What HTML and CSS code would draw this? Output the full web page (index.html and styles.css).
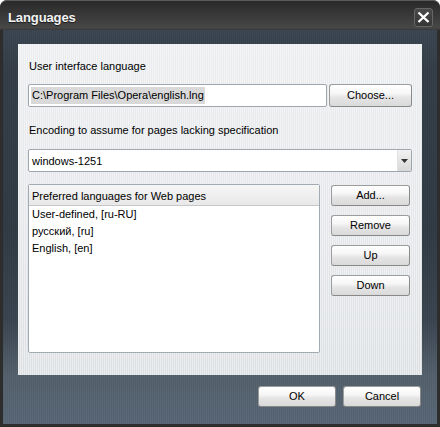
FILE: index.html
```html
<!DOCTYPE html>
<html>
<head>
<meta charset="utf-8">
<link rel="stylesheet" href="styles.css">
</head>
<body>
<div class="window">
  <div class="titlebar">
    <span class="title">Languages</span>
    <div class="close">
      <svg width="17" height="17" viewBox="0 0 17 17"><path d="M3.5 3.5 L13.5 13 M13.5 3.5 L3.5 13" stroke="#fff" stroke-width="2.4" fill="none"/></svg>
    </div>
  </div>
  <div class="frame">
    <div class="panel">
      <div class="label first">User interface language</div>
      <div class="row">
        <div class="input"><span class="sel">C:\Program Files\Opera\english.lng</span></div>
        <div class="btn choose">Choose...</div>
      </div>
      <div class="label second">Encoding to assume for pages lacking specification</div>
      <div class="select">
        <span class="seltext">windows-1251</span>
        <span class="arrow"><svg width="7" height="4" viewBox="0 0 7 4"><path d="M0 0 H7 L3.5 4 Z" fill="#333"/></svg></span>
      </div>
      <div class="listrow">
        <div class="list">
          <div class="head">Preferred languages for Web pages</div>
          <div class="item">User-defined, [ru-RU]</div>
          <div class="item">русский, [ru]</div>
          <div class="item">English, [en]</div>
        </div>
        <div class="side">
          <div class="btn">Add...</div>
          <div class="btn">Remove</div>
          <div class="btn">Up</div>
          <div class="btn">Down</div>
        </div>
      </div>
    </div>
    <div class="footer">
      <div class="btn foot">OK</div>
      <div class="btn foot">Cancel</div>
    </div>
  </div>
</div>
</body>
</html>
```
FILE: styles.css
```css
* { box-sizing: border-box; }
html, body { margin: 0; padding: 0; background: #ffffff; }
body { font-family: "Liberation Sans", Arial, sans-serif; font-size: 11px; color: #000; }

.window {
  width: 440px;
  height: 427px;
  background: #2d2d2d;
  border-radius: 7px 7px 0 0;
  display: flex;
  flex-direction: column;
  padding: 0 3px 3px 3px;
  overflow: hidden;
}

.titlebar {
  height: 30px;
  margin: 0 -3px;
  padding: 8px 7px 0 8px;
  display: flex;
  align-items: flex-start;
  justify-content: space-between;
  background: linear-gradient(#2a2a2a 0, #303030 6px, #474747 27px, #2e2e2e 30px);
  border-top: 1px solid #5a5a5a;
  border-radius: 7px 7px 0 0;
  flex: none;
}
.title {
  color: #f4f4f4;
  font-weight: bold;
  font-size: 13px;
  line-height: 18px;
  letter-spacing: -0.1px;
  text-shadow: 0 1px 1px rgba(0,0,0,0.6);
}
.close {
  width: 19px;
  height: 19px;
  margin-top: -1px;
  border: 1px solid #666;
  border-radius: 3px;
  background: linear-gradient(#4a4a4a, #353535);
  display: flex;
  align-items: center;
  justify-content: center;
}

.frame {
  flex: 1;
  padding: 14px 15px 0 15px;
  background:
    repeating-linear-gradient(90deg, rgba(0,0,0,0.07) 0 1px, rgba(255,255,255,0) 1px 2px),
    linear-gradient(#3d4854 0, #36404b 40px, #333d47 200px, #3c4753 290px, #57646f 345px, #5b6979 100%);
  display: flex;
  flex-direction: column;
}

.panel {
  height: 331px;
  padding: 0 10px;
  background:
    repeating-linear-gradient(90deg, rgba(255,255,255,0.45) 0 1px, rgba(255,255,255,0) 1px 2px),
    linear-gradient(#eaecee, #e4e6e9 60%, #dcdfe2);
  flex: none;
}

.label { line-height: 13px; padding-left: 1px; }
.label.first { margin-top: 16px; }
.label.second { margin-top: 17px; }

.row { display: flex; gap: 2px; margin-top: 11px; height: 23px; }
.input {
  flex: 1;
  height: 23px;
  border: 1px solid #9ea6ae;
  border-radius: 2px;
  background: #fff;
  padding-left: 2px;
  display: flex;
  align-items: center;
}
.sel { background: #d9d9d9; padding: 1px 1px; line-height: 15px; }

.btn {
  border: 1px solid #9c9c9c;
  border-right-color: #8a8a8a;
  border-bottom-color: #888;
  border-radius: 3px;
  background: linear-gradient(#ffffff 0, #f6f6f6 40%, #e4e4e4 60%, #dadada 100%);
  display: flex;
  align-items: center;
  justify-content: center;
  line-height: 13px;
}
.choose { width: 83px; height: 23px; }

.select {
  margin-top: 12px;
  height: 23px;
  border: 1px solid #9ea6ae;
  border-radius: 2px;
  background: #fff;
  display: flex;
  align-items: center;
  justify-content: space-between;
}
.seltext { padding-left: 3px; }
.arrow {
  width: 14px;
  height: 21px;
  background: linear-gradient(#f2f2f2, #d8d8d8);
  border-left: 1px solid #e2e2e2;
  display: flex;
  align-items: center;
  justify-content: center;
}

.listrow { display: flex; margin-top: 12px; }
.list {
  width: 292px;
  height: 169px;
  border: 1px solid #a2aab2;
  border-radius: 2px;
  background: #fff;
}
.head {
  height: 21px;
  padding: 3px 0 0 3px;
  line-height: 17px;
  background: linear-gradient(#f6f6f6, #e8e8e8);
  border-bottom: 1px solid #c4c8cc;
}
.item { line-height: 17px; padding-left: 3px; }

.side {
  width: 79px;
  margin-left: 11px;
  padding-top: 1px;
  display: flex;
  flex-direction: column;
  gap: 9px;
}
.side .btn { height: 21px; }

.footer {
  display: flex;
  justify-content: flex-end;
  gap: 7px;
  margin-top: 11px;
  padding-right: 1px;
}
.foot { width: 78px; height: 21px; }
```
